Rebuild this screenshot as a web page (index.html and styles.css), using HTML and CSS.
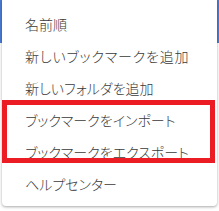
FILE: index.html
```html
<!DOCTYPE html>
<html lang="ja">
<head>
<meta charset="utf-8">
<link rel="stylesheet" href="styles.css">
</head>
<body>
<div class="page">
  <div class="bar"></div>
  <div class="menu">
    <div class="item">名前順</div>
    <div class="item item-wide">新しいブックマークを追加</div>
    <div class="item">新しいフォルダを追加</div>
    <div class="item">ブックマークをインポート</div>
    <div class="item">ブックマークをエクスポート</div>
    <div class="item">ヘルプセンター</div>
    <div class="mark"></div>
  </div>
</div>
</body>
</html>
```
FILE: styles.css
```css
html, body {
  margin: 0;
  padding: 0;
  background: #ffffff;
}
.page {
  position: relative;
  width: 219px;
  height: 211px;
  overflow: hidden;
}
.bar {
  height: 43px;
  background: #4a7bd3;
}
.menu {
  position: absolute;
  left: 2px;
  top: 0;
  width: 215px;
  padding: 8px 0 6px;
  background: #ffffff;
  border-radius: 0 0 4px 4px;
  box-shadow: 0 1px 3px rgba(0, 0, 0, 0.35);
  display: flex;
  flex-direction: column;
}
.item {
  height: 32px;
  line-height: 32px;
  padding-left: 23px;
  font-family: "Noto Sans CJK JP", "Noto Sans", sans-serif;
  font-size: 14px;
  font-weight: 300;
  font-feature-settings: "palt";
  color: #3a3a3a;
  white-space: nowrap;
}
.item-wide {
  letter-spacing: 0.8px;
}
.mark {
  position: absolute;
  left: 0;
  top: 100px;
  width: 203px;
  height: 53px;
  border: 5px solid #ec1c24;
}
```
